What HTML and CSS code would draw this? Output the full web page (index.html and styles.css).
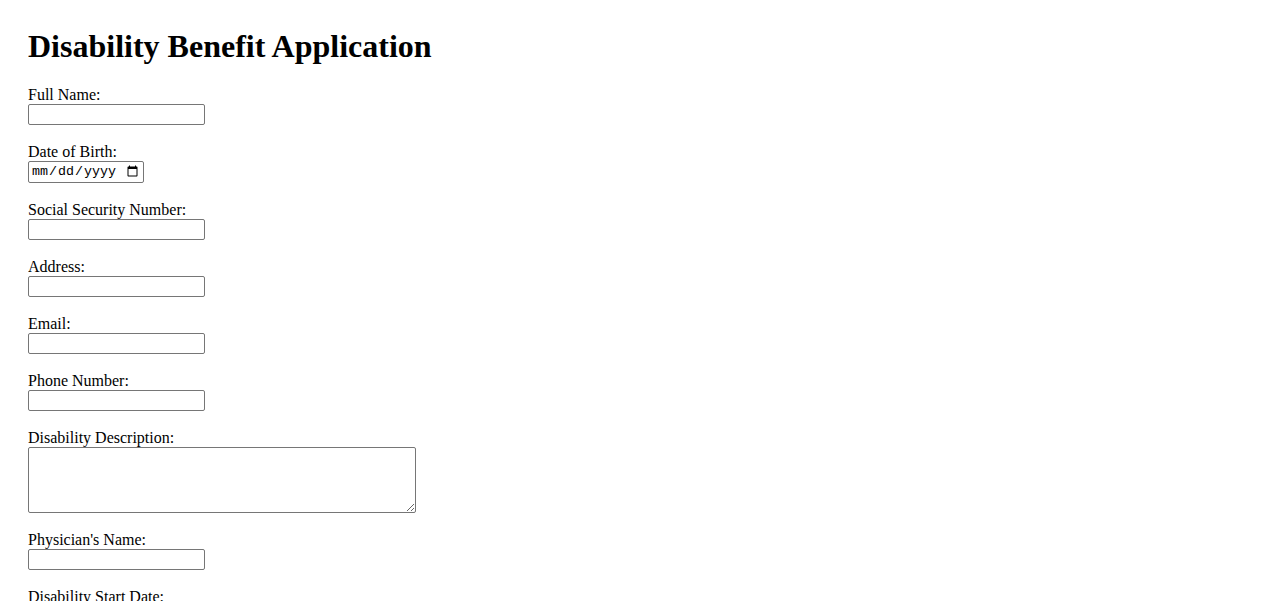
FILE: index.html
```html
<!DOCTYPE html>
<html lang="en">
<head>
  <meta charset="UTF-8">
  <title>Disability Benefit Application</title>
  <link rel="stylesheet" href="styles.css">
</head>
<body>
  <h1>Disability Benefit Application</h1>
  <form>
    <label for="name">Full Name:</label><br>
    <input type="text" id="name" name="name"><br><br>

    <label for="dob">Date of Birth:</label><br>
    <input type="date" id="dob" name="dob"><br><br>

    <label for="ssn">Social Security Number:</label><br>
    <input type="text" id="ssn" name="ssn"><br><br>

    <label for="address">Address:</label><br>
    <input type="text" id="address" name="address"><br><br>

    <label for="email">Email:</label><br>
    <input type="email" id="email" name="email"><br><br>

    <label for="phone">Phone Number:</label><br>
    <input type="tel" id="phone" name="phone"><br><br>

    <label for="description">Disability Description:</label><br>
    <textarea id="description" name="description" rows="4" cols="50"></textarea><br><br>

    <label for="physician">Physician's Name:</label><br>
    <input type="text" id="physician" name="physician"><br><br>

    <label for="start">Disability Start Date:</label><br>
    <input type="date" id="start" name="start"><br><br>

    <input type="submit" value="Submit Application">
  </form>
</body>
</html>
```

FILE: styles.css
```css
body {
  margin: 28px;
  font-family: 'Liberation Serif', serif;
  font-size: 16px;
  color: #000;
  background: #fff;
}

h1 {
  margin: 0 0 21px;
  font-size: 32px;
}

input[type="text"],
input[type="email"],
input[type="tel"] {
  box-sizing: border-box;
  width: 177px;
  height: 21px;
  font-family: 'Liberation Sans', sans-serif;
  font-size: 13.33px;
  border: 1px solid #767676;
  border-radius: 2px;
  padding: 1px 2px;
}

input[type="date"] {
  box-sizing: border-box;
  width: 116px;
  height: 22px;
  font-family: 'Liberation Mono', monospace;
  font-size: 13.33px;
  border: 1px solid #767676;
  border-radius: 2px;
  padding: 1px 2px;
}

textarea {
  box-sizing: border-box;
  width: 388px;
  height: 66px;
  font-family: 'Liberation Mono', monospace;
  font-size: 13.33px;
  border: 1px solid #767676;
  border-radius: 2px;
  padding: 2px;
  vertical-align: bottom;
}
```
